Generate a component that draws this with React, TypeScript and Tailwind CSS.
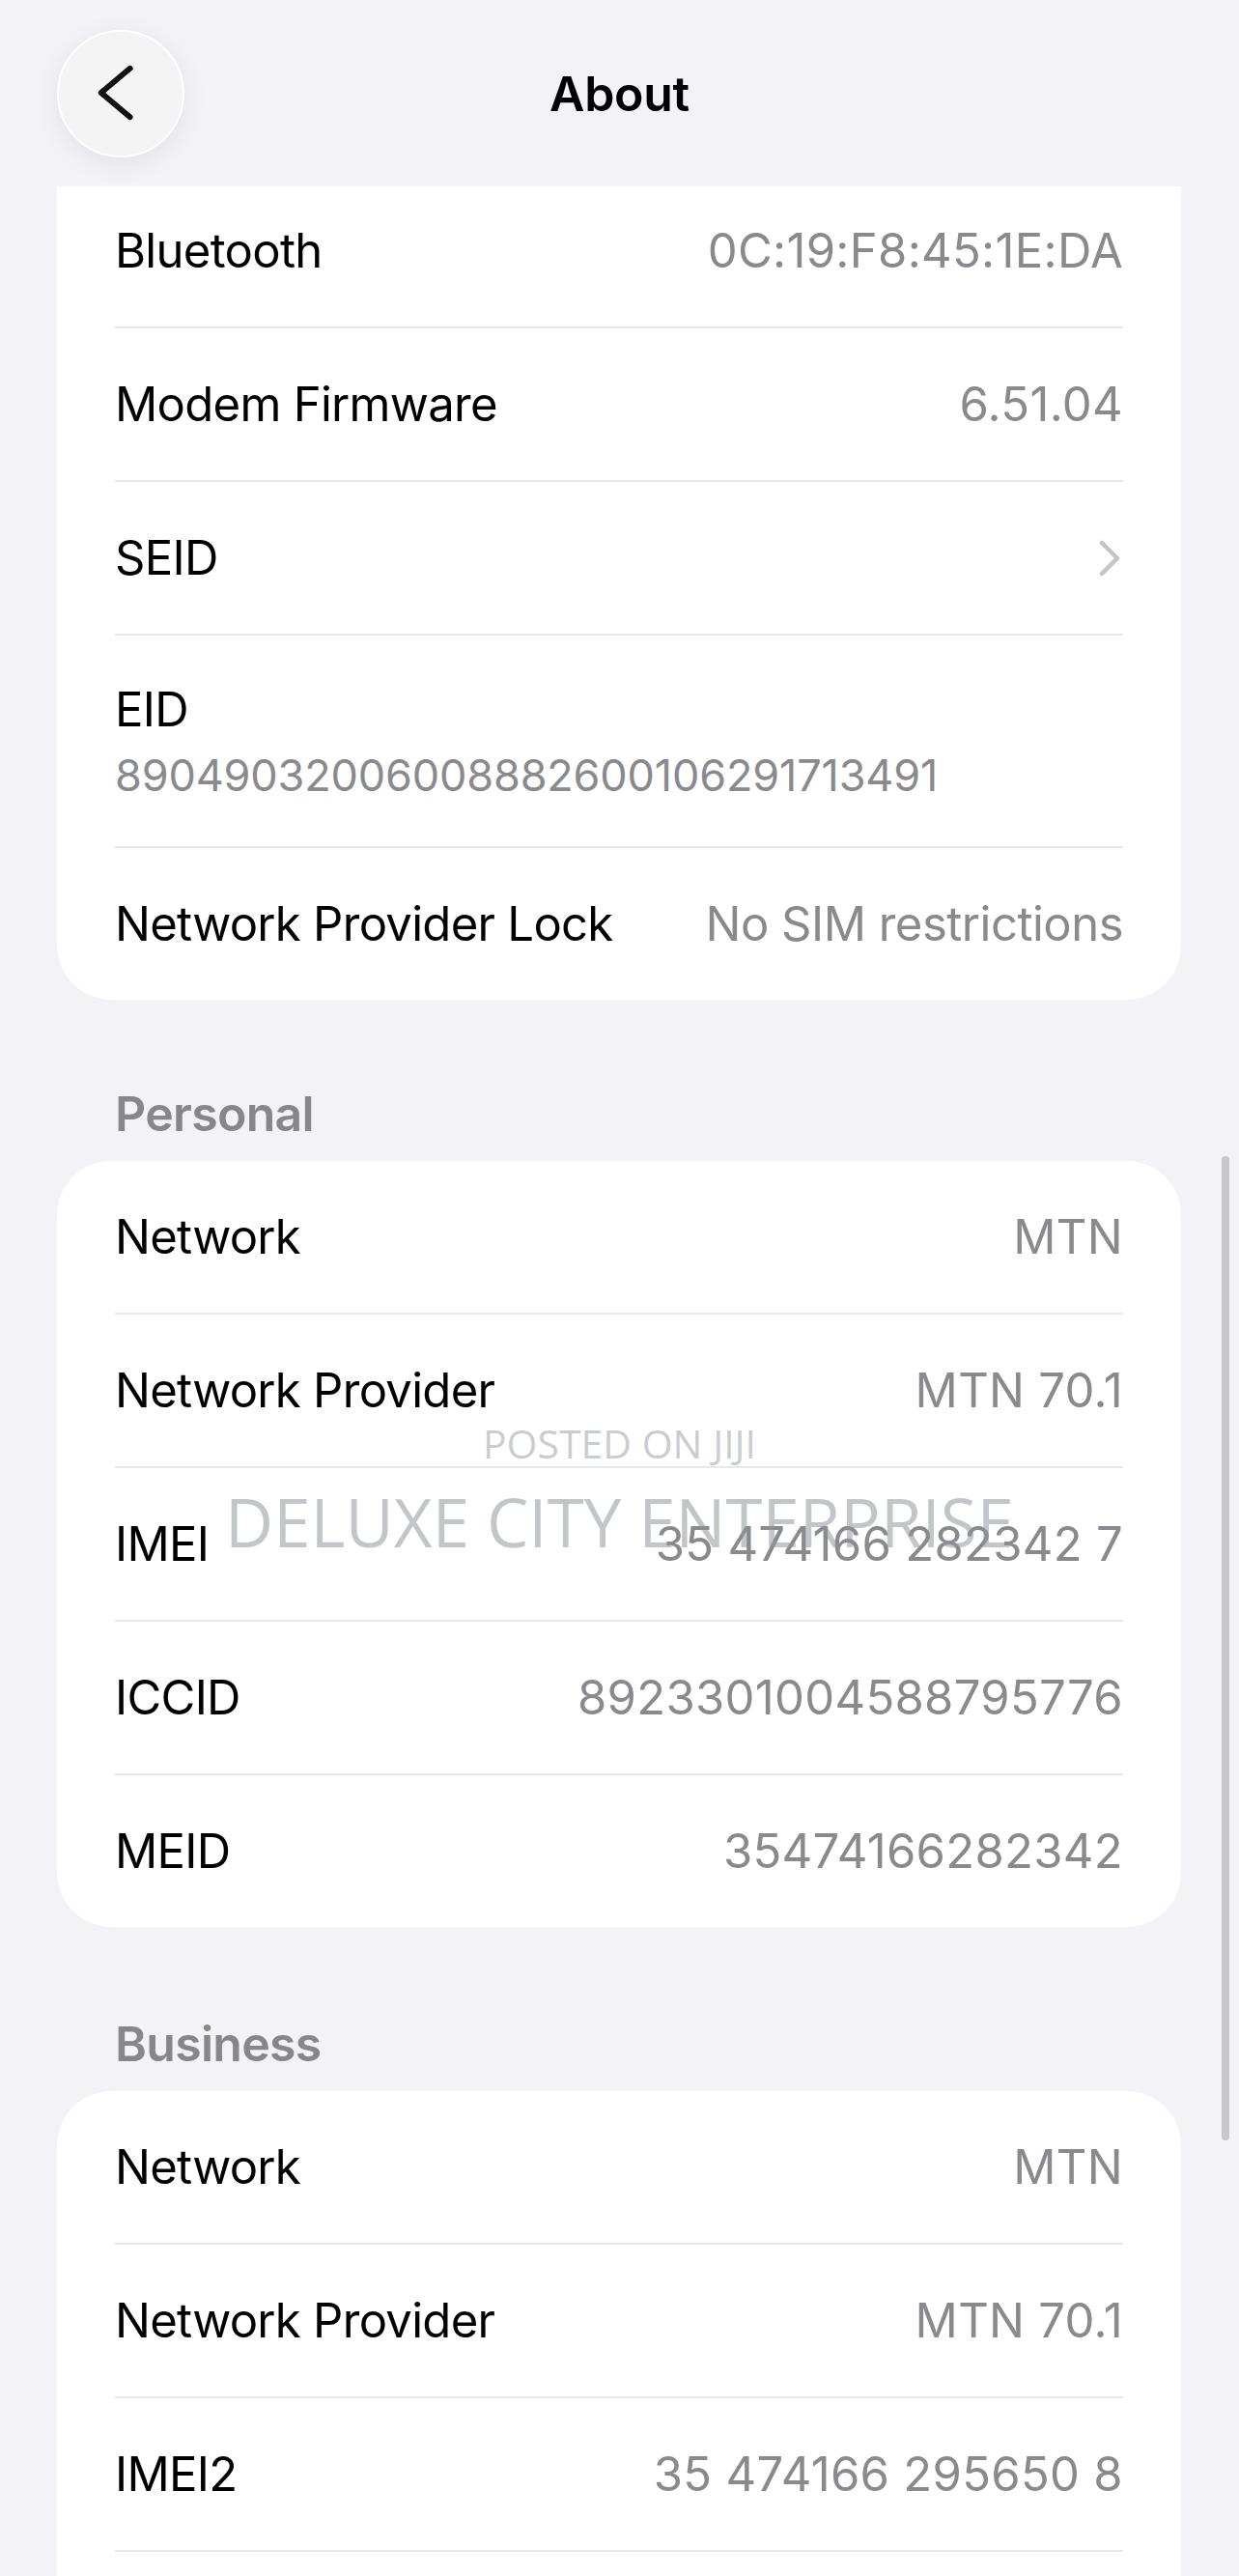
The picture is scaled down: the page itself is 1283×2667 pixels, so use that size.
import React from "react";

type Row = { label: string; value?: string; chevron?: boolean; valueTrack?: string };

const Divider = () => <div className="h-[2px] bg-[#e7e7ec]" />;

function RowView({ row, first }: { row: Row; first?: boolean }) {
  return (
    <div
      className={
        first
          ? "h-[145px] pb-[12px] flex items-center justify-between"
          : "h-[157px] flex items-center justify-between"
      }
    >
      <span className="text-[49px] leading-none text-black tracking-[-0.7px]">{row.label}</span>
      {row.chevron ? (
        <svg width="26" height="38" viewBox="0 0 26 38" className="mr-[1px]">
          <path d="M5 3 L21 19 L5 35" fill="none" stroke="#c4c4c7" strokeWidth="4.5" strokeLinecap="round" strokeLinejoin="round" />
        </svg>
      ) : (
        <span className={`text-[49px] leading-none text-[#8a8a8e] ${row.valueTrack ?? "tracking-[0.3px]"}`}>{row.value}</span>
      )}
    </div>
  );
}

function Section({ title, top }: { title: string; top: string }) {
  return (
    <div className={`${top} mb-[24px] pl-[119px] text-[50px] leading-none font-semibold text-[#86868b] tracking-[-0.7px]`}>
      {title}
    </div>
  );
}

function Card({ rows }: { rows: Row[] }) {
  return (
    <div className="ml-[59px] w-[1164px] bg-white px-[60px] rounded-[56px]">
      {rows.map((r, i) => (
        <React.Fragment key={i}>
          {i > 0 && <Divider />}
          <RowView row={r} />
        </React.Fragment>
      ))}
    </div>
  );
}

export default function App() {
  return (
    <div
      className="relative w-full h-[2667px] overflow-hidden bg-[#f2f2f7]"
      style={{ fontFamily: "Inter, 'Liberation Sans', sans-serif" }}
    >
      {/* Header */}
      <div className="h-[193px] pt-[31px] grid grid-cols-[1fr_auto_1fr] items-start">
        <div className="pl-[59px]">
          <div className="w-[132px] h-[132px] rounded-full bg-[#f4f4f5] border-2 border-white shadow-[0_6px_28px_rgba(0,0,0,0.07)] flex items-center justify-center">
            <svg width="132" height="132" viewBox="0 0 132 132">
              <path d="M76 39 L45 65 L76 91" fill="none" stroke="#111" strokeWidth="6" strokeLinecap="round" strokeLinejoin="round" />
            </svg>
          </div>
        </div>
        <div className="h-[132px] flex items-center">
          <span className="text-[50px] leading-none font-semibold text-black tracking-[-0.3px]">About</span>
        </div>
        <div />
      </div>

      {/* Card 1 (scrolled, top clipped) */}
      <div className="ml-[59px] w-[1164px] bg-white px-[60px] rounded-b-[56px]">
        <RowView row={{ label: "Bluetooth", value: "0C:19:F8:45:1E:DA" }} first />
        <Divider />
        <RowView row={{ label: "Modem Firmware", value: "6.51.04" }} />
        <Divider />
        <RowView row={{ label: "SEID", chevron: true }} />
        <Divider />
        <div className="h-[218px] flex flex-col justify-center">
          <span className="text-[49px] leading-none text-black tracking-[-0.7px]">EID</span>
          <span className="mt-[21px] text-[45px] leading-none text-[#8a8a8e] tracking-[-0.15px]">
            89049032006008882600106291713491
          </span>
        </div>
        <Divider />
        <RowView row={{ label: "Network Provider Lock", value: "No SIM restrictions", valueTrack: "tracking-[-0.5px]" }} />
      </div>

      <Section title="Personal" top="mt-[93px]" />
      <Card
        rows={[
          { label: "Network", value: "MTN" },
          { label: "Network Provider", value: "MTN 70.1" },
          { label: "IMEI", value: "35 474166 282342 7" },
          { label: "ICCID", value: "8923301004588795776" },
          { label: "MEID", value: "35474166282342" },
        ]}
      />

      <Section title="Business" top="mt-[96px]" />
      <div className="ml-[59px] w-[1164px] bg-white px-[60px] rounded-t-[56px]">
        <RowView row={{ label: "Network", value: "MTN" }} />
        <Divider />
        <RowView row={{ label: "Network Provider", value: "MTN 70.1" }} />
        <Divider />
        <RowView row={{ label: "IMEI2", value: "35 474166 295650 8" }} />
        <Divider />
        <div className="h-[157px]" />
      </div>

      {/* Watermark overlay */}
      <div
        className="absolute left-0 right-0 top-[1474px] text-center text-[41px] leading-none text-[rgba(150,156,162,0.5)]"
        style={{ fontFamily: "'Open Sans', sans-serif" }}
      >
        POSTED ON JIJI
      </div>
      <div
        className="absolute left-0 right-0 top-[1541px] text-center text-[69px] leading-none text-[rgba(140,146,152,0.52)]"
        style={{ fontFamily: "'Open Sans', sans-serif" }}
      >
        DELUXE CITY ENTERPRISE
      </div>

      {/* Scroll indicator */}
      <div className="absolute left-[1265px] top-[1197px] w-[8px] h-[1019px] rounded-full bg-[#c7c7cc]" />
    </div>
  );
}
